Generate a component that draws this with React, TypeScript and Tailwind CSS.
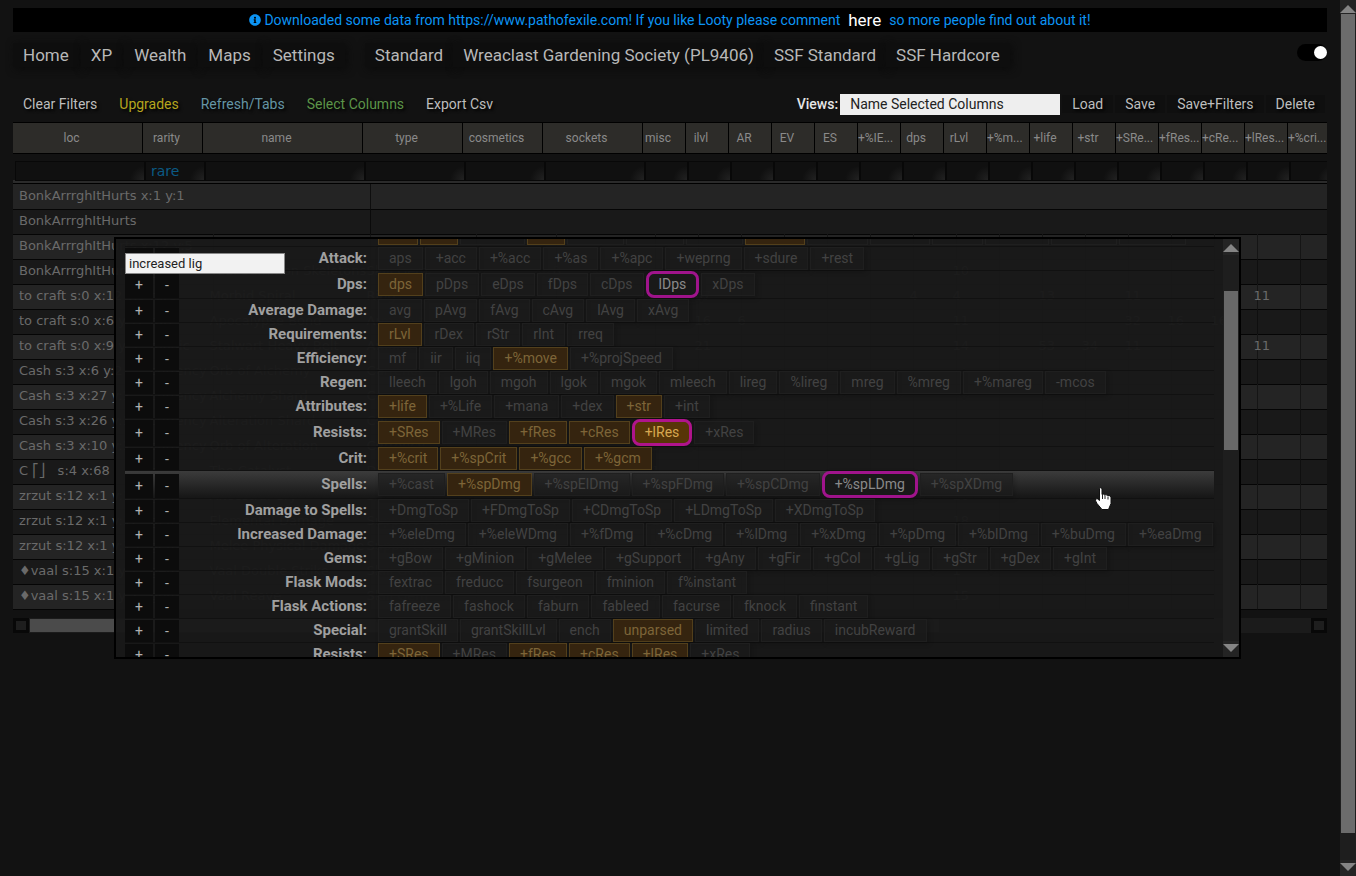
import React from "react";
import { FaInfoCircle } from "react-icons/fa";

const statNames = ["misc", "ilvl", "AR", "EV", "ES", "+%IE...", "dps", "rLvl", "+%m...", "+life", "+str", "+SRe...", "+fRes...", "+cRe...", "+lRes...", "+%cri..."];

const cols: [string, string][] = [
  ["loc", "w-[130px]"],
  ["rarity", "w-[60px]"],
  ["name", "w-[160px]"],
  ["type", "w-[100px]"],
  ["cosmetics", "w-20"],
  ["sockets", "w-[100px]"],
  ...statNames.map((n): [string, string] => [n, "w-[43px]"]),
];

const bodyWidths = ["w-[141px]", "w-[59px]", "w-[157px]", "w-[106px]", "w-20", "w-[99px]", ...statNames.map(() => "w-[43px]")];

type Item = { loc: string; rarity?: string; name?: string; type?: string; socket?: string; v?: Record<number, string> };

const items: Item[] = [
  { loc: "BonkArrrghItHurts x:12 y:5" },
  { loc: "BonkArrrghItHurts", rarity: "gem", name: "Vaal Summon Skeletons", type: "Skill Gem", socket: "B", v: { 7: "10" } },
  { loc: "to craft s:0 x:12 y:9", rarity: "rare", name: "Morbid Spiral", type: "Ring", v: { 1: "67", 6: "4", 7: "4", 9: "13", 11: "11", 14: "11" } },
  { loc: "to craft s:0 x:6 y:12", rarity: "rare", name: "Apocalypse Bond", type: "Arm Belt", v: { 1: "16", 2: "6", 7: "11", 11: "32", 12: "16", 13: "16" } },
  { loc: "to craft s:0 x:9 y:5", rarity: "magic", name: "Stalwart Heavy Belt", type: "Amulet", v: { 1: "21", 7: "14", 9: "53", 10: "34", 11: "11", 14: "11" } },
  { loc: "Cash s:3 x:6 y:2", rarity: "currency", name: "Orb of Alchemy", type: "Currency", v: { 0: "4" } },
  { loc: "Cash s:3 x:27 y:1", rarity: "currency", name: "Alchemy Shard", type: "Currency", v: { 0: "18" } },
  { loc: "Cash s:3 x:26 y:1", rarity: "currency", name: "Alteration Shard", type: "Currency", v: { 0: "19" } },
  { loc: "Cash s:3 x:10 y:1", rarity: "currency", name: "Orb of Alteration", type: "Currency", v: { 0: "9" } },
  { loc: "C ⎡⎦   s:4 x:68", rarity: "card", name: "The Catalyst", type: "DivCard", v: { 0: "1" } },
  { loc: "zrzut s:12 x:1 y:14", rarity: "gem", name: "Ancestral Cry", type: "Skill Gem", socket: "R", v: { 0: "1", 7: "16" } },
  { loc: "zrzut s:12 x:1 y:12", rarity: "gem", name: "Elemental Damage", type: "Support Gem", socket: "R", v: { 0: "1", 7: "18" } },
  { loc: "zrzut s:12 x:1 y:13", rarity: "gem", name: "Melee Physical Damage", type: "Support Gem", socket: "R", v: { 0: "1", 7: "18" } },
  { loc: "♦vaal s:15 x:1 y:1", rarity: "gem", name: "Vaal Double Strike", type: "Skill Gem", socket: "G", v: { 0: "1", 7: "1" } },
  { loc: "♦vaal s:15 x:1 y:2", rarity: "gem", name: "Vaal Reave", type: "Skill Gem", socket: "G", v: { 0: "2", 7: "15" } },
];

/* "*" marks an enabled column, "!" a column that matches the search */
const groups: [string, string][] = [
  ["Attack:", "aps +acc +%acc +%as +%apc +weprng +sdure +rest"],
  ["Dps:", "*dps pDps eDps fDps cDps !lDps xDps"],
  ["Average Damage:", "avg pAvg fAvg cAvg lAvg xAvg"],
  ["Requirements:", "*rLvl rDex rStr rInt rreq"],
  ["Efficiency:", "mf iir iiq *+%move +%projSpeed"],
  ["Regen:", "lleech lgoh mgoh lgok mgok mleech lireg %lireg mreg %mreg +%mareg -mcos"],
  ["Attributes:", "*+life +%Life +mana +dex *+str +int"],
  ["Resists:", "*+SRes +MRes *+fRes *+cRes !*+lRes +xRes"],
  ["Crit:", "*+%crit *+%spCrit *+%gcc *+%gcm"],
  ["Spells:", "+%cast *+%spDmg +%spElDmg +%spFDmg +%spCDmg !+%spLDmg +%spXDmg"],
  ["Damage to Spells:", "+DmgToSp +FDmgToSp +CDmgToSp +LDmgToSp +XDmgToSp"],
  ["Increased Damage:", "+%eleDmg +%eleWDmg +%fDmg +%cDmg +%lDmg +%xDmg +%pDmg +%blDmg +%buDmg +%eaDmg"],
  ["Gems:", "+gBow +gMinion +gMelee +gSupport +gAny +gFir +gCol +gLig +gStr +gDex +gInt"],
  ["Flask Mods:", "fextrac freducc fsurgeon fminion f%instant"],
  ["Flask Actions:", "fafreeze fashock faburn fableed facurse fknock finstant"],
  ["Special:", "grantSkill grantSkillLvl ench *unparsed limited radius incubReward"],
  ["Resists:", "*+SRes +MRes *+fRes *+cRes *+lRes +xRes"],
];

const scrolledChips: [string, boolean][] = [
  ["w-10", true], ["w-[38px]", true], ["w-[65px]", false], ["w-[38px]", true], ["w-[57px]", false], ["w-[58px]", false], ["w-[57px]", false],
  ["w-[60px]", true], ["w-[61px]", false], ["w-[60px]", false], ["w-[51px]", false], ["w-[64px]", false], ["w-[66px]", false], ["w-[67px]", false],
];

function Chip({ code }: { code: string }) {
  const hit = code.startsWith("!");
  const on = code.includes("*");
  const label = code.replace(/^[!*]+/, "");
  const look = hit
    ? on
      ? "h-[27px] rounded-lg border-3 border-[#b0148c] bg-[#573508] text-[#d8a850]"
      : "h-[27px] rounded-lg border-3 border-[#a0148c] bg-[#191919] text-[#8a8a8a]"
    : on
      ? "h-[23px] border border-[#53401c] bg-[#35240f] text-[#7d6538]"
      : "h-[23px] border border-[#1f1f1f] bg-[#1a1a1a]/60 text-[#424242]";
  return <button className={"shrink-0 px-[10px] leading-[21px] shadow-[2px_2px_5px_rgba(0,0,0,0.2)] " + look}>{label}</button>;
}

function Group({ name, codes }: { name: string; codes: string }) {
  const hover = name === "Spells:";
  return (
    <div className={"flex shrink-0 items-center border-b border-[#111] " + (hover ? "bg-linear-to-b from-[#3c3c3c] to-[#161616]" : "")}>
      <div className={"flex gap-[2px] self-stretch text-[#b0b0b0] " + (hover ? "pt-[3px]" : "pt-px")}>
        <button className="w-7 bg-[#0c0c0c]" aria-label="Enable group">+</button>
        <button className="w-6 bg-[#0c0c0c]" aria-label="Disable group">-</button>
      </div>
      <div className="mr-[11px] w-[188px] text-right text-[15px] font-bold text-[#a0a0a0]">{name}</div>
      <div className="flex items-center gap-[2px]">
        {codes.split(" ").map((c) => <Chip key={c} code={c} />)}
      </div>
    </div>
  );
}

function Arrow({ up }: { up?: boolean }) {
  return (
    <svg viewBox="0 0 16 16" className="block h-4 w-4 bg-[#242424]" fill="#858585">
      <path d={up ? "M0 13 8 5l8 8z" : "M0 3h16l-8 8z"} />
    </svg>
  );
}

function ColumnPanel() {
  return (
    <section className="absolute top-[83px] right-[86px] left-[101px] flex h-[422px] border-2 border-black bg-[#191919]/96 text-sm">
      <div className="flex min-w-0 flex-1 flex-col overflow-hidden px-[9px]">
        <div className="flex h-2 shrink-0 gap-[2px] overflow-hidden border-b border-[#111] pl-[253px]">
          {scrolledChips.map(([w, on], i) => (
            <div key={i} className={"mb-px shrink-0 border border-t-0 " + w + (on ? " border-[#53401c] bg-[#35240f]" : " border-[#1f1f1f]")} />
          ))}
        </div>
        {groups.map(([n, c], i) => <Group key={i} name={n} codes={c} />)}
      </div>
      <input aria-label="Search columns" defaultValue="increased lig" className="absolute top-[14px] left-[9px] h-[21px] w-40 border border-[#888] bg-[#f2f2f2] px-[3px] text-[13px] text-[#222]" />
      <div className="flex w-4 flex-col bg-[#1e1e1e]">
        <Arrow up />
        <div className="mx-px mt-9 h-[159px] bg-[#686868]" />
        <div className="mt-auto"><Arrow /></div>
      </div>
      <svg viewBox="0 0 17 24" className="absolute top-[248px] left-[979px] h-6 w-[17px]">
        <path d="M4.500 1.500Q5.500 0 7 1.500V7.500Q8.500 6.500 9.500 8 11 7 12.500 8.500 14.500 8 16 10V16.500L13.500 22.500H7L2 16.500Q0 13.500 .5 12 2.500 11 4.500 13.500Z" fill="#fff" stroke="#111" />
        <path d="M7.500 8v4M10 8.500V12M13 9.500V12.500" stroke="#222" />
      </svg>
    </section>
  );
}

function ItemTable() {
  const cell = "border-r border-black/40 p-0 -indent-1 whitespace-nowrap";
  return (
    <table className="w-[1330px] table-fixed border-collapse font-['DejaVu_Sans',sans-serif] text-[13px] text-[#6a6a6a]">
      <colgroup>
        {bodyWidths.map((w, i) => <col key={i} className={w} />)}
      </colgroup>
      <tbody>
        {["BonkArrrghItHurts x:1 y:1", "BonkArrrghItHurts"].map((t) => (
          <tr key={t} className="h-[25px] border-b border-[#050505] odd:bg-[#242424] even:bg-[#191919]">
            <td colSpan={3} className="border-r border-black/60 py-0 pr-0 pl-[6px]">{t}</td>
            <td colSpan={19} className="p-0" />
          </tr>
        ))}
        {items.map((it) => (
          <tr key={it.loc} className="h-[25px] border-b border-[#050505] odd:bg-[#242424] even:bg-[#191919]">
            <td className="py-0 pr-0 pl-[6px] whitespace-pre">{it.loc}</td>
            <td className={cell}>{it.rarity}</td>
            <td className={cell}>{it.name}</td>
            <td className={cell}>{it.type}</td>
            <td className={cell} />
            <td className={cell}>{it.socket}</td>
            {statNames.map((n, i) => <td key={n} className={cell}>{it.v?.[i]}</td>)}
          </tr>
        ))}
      </tbody>
    </table>
  );
}

const nav = "bg-[#0e0e0e] px-[10px] shadow-[2px_2px_8px_#0b0b0b]";
const tool = "px-[10px] [text-shadow:2px_2px_3px_#000]";

export default function App() {
  return (
    <div className="flex min-h-screen bg-[#121212] font-['Roboto',sans-serif] text-sm text-[#bdbdbd]">
      <main className="min-w-0 flex-1 overflow-hidden px-[13px] pt-2">
        <div className="flex h-6 items-center justify-center bg-black text-[#0c94f4]">
          <FaInfoCircle className="mr-[3px] h-3 w-3" />
          Downloaded some data from https://www.pathofexile.com! If you like Looty please comment
          <a href="#here" className="mx-2 text-[17px] text-white">here</a>
          so more people find out about it!
        </div>
        <header className="flex justify-between">
          <div className="mt-[11px] flex h-6 items-center gap-5 text-[17px] text-[#b8b8b8]">
            <nav className="flex gap-[2px]">
              {["Home", "XP", "Wealth", "Maps", "Settings"].map((t) => <a key={t} href="#page" className={nav}>{t}</a>)}
            </nav>
            <nav className="flex">
              {["Standard", "Wreaclast Gardening Society (PL9406)", "SSF Standard", "SSF Hardcore"].map((t) => <a key={t} href="#league" className={nav}>{t}</a>)}
            </nav>
          </div>
          <button aria-label="Toggle theme" className="mt-3 flex h-[17px] w-[30px] items-center justify-end rounded-full bg-black">
            <span className="h-[13px] w-[13px] rounded-full bg-white" />
          </button>
        </header>
        <div className="mt-[27px] flex h-[21px] items-center gap-[2px] pr-[2px] leading-[18px]">
          <div className="mb-[2px] flex gap-[2px]">
            <button className={tool}>Clear Filters</button>
            <button className={tool + " text-[#b5a51e]"}>Upgrades</button>
            <button className={tool + " text-[#6595a5]"}>Refresh/Tabs</button>
            <button className={tool + " text-[#5c9448]"}>Select Columns</button>
            <button className={tool}>Export Csv</button>
          </div>
          <label htmlFor="view" className="mb-[2px] ml-auto font-medium text-[#e6e6e6]">Views:</label>
          <input id="view" defaultValue="Name Selected Columns" className="h-[21px] w-[220px] bg-[#eee] px-[10px] pb-[2px] text-[#222]" />
          <div className="mb-[2px] flex gap-[2px]">
            {["Load", "Save", "Save+Filters", "Delete"].map((t) => <button key={t} className={tool + " bg-[#0f0f0f]"}>{t}</button>)}
          </div>
        </div>
        <div className="mt-[7px] flex h-8 overflow-hidden border-y border-black bg-[#2d2c29] text-xs text-[#8a8a8a]">
          {cols.map(([n, w]) => (
            <div key={n} className={"flex shrink-0 items-center border-r border-black " + w + (n.endsWith("...") ? "" : " justify-center pr-3")}>{n}</div>
          ))}
        </div>
        <div className="relative">
          <div className="flex h-[30px] overflow-hidden border-b border-black bg-linear-to-b from-[#121212] from-90% to-[#2b2b2b] to-90% pt-[7px] pl-[2px]">
            {cols.map(([n, w]) => (
              <input
                key={n}
                aria-label={"Filter " + n}
                defaultValue={n === "rarity" ? "rare" : ""}
                className={"h-5 shrink-0 border border-[#080808] bg-[radial-gradient(circle_at_100%_100%,#222,#101010_14px)] px-[5px] font-['DejaVu_Sans',sans-serif] text-sm text-[#0b5a84] " + w}
              />
            ))}
          </div>
          <div className="overflow-hidden">
            <ItemTable />
          </div>
          <div className="mt-2 flex h-[15px] items-center bg-[#1b1b1b]">
            <span className="h-[15px] w-4 border-3 border-[#080808] bg-[#1e1e1e]" />
            <span className="ml-px h-[13px] w-[909px] bg-[#4b4b4b]" />
            <span className="ml-auto h-[15px] w-4 border-3 border-[#080808] bg-[#1e1e1e]" />
          </div>
          <ColumnPanel />
        </div>
      </main>
      <div className="flex w-4 flex-col bg-[#1e1e1e]">
        <div className="h-[14px] overflow-hidden"><Arrow up /></div>
        <div className="mx-px mb-[27px] flex-1 bg-[#6c6c6c]" />
        <Arrow />
      </div>
    </div>
  );
}
